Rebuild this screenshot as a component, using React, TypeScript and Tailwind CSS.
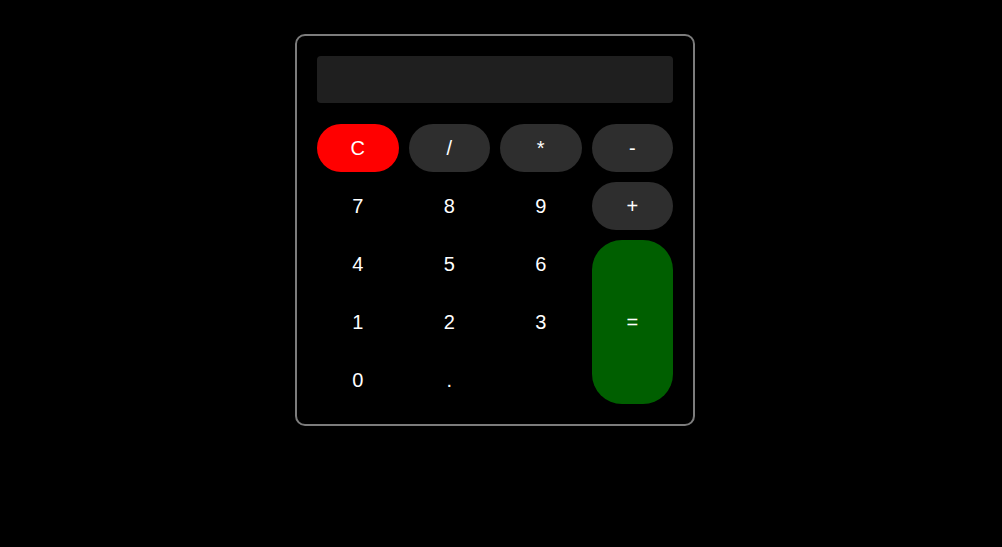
const keys: { label: string; kind: "clear" | "op" | "num" | "eq" }[] = [
  { label: "C", kind: "clear" },
  { label: "/", kind: "op" },
  { label: "*", kind: "op" },
  { label: "-", kind: "op" },
  { label: "7", kind: "num" },
  { label: "8", kind: "num" },
  { label: "9", kind: "num" },
  { label: "+", kind: "op" },
  { label: "4", kind: "num" },
  { label: "5", kind: "num" },
  { label: "6", kind: "num" },
  { label: "=", kind: "eq" },
  { label: "1", kind: "num" },
  { label: "2", kind: "num" },
  { label: "3", kind: "num" },
  { label: "0", kind: "num" },
  { label: ".", kind: "num" },
];

const styleFor = {
  clear: "bg-[#ff0000]",
  op: "bg-[#2e2e2e]",
  num: "bg-transparent",
  eq: "bg-[#005f00] row-span-3 col-start-4 row-start-3",
};

const App = () => {
  return (
    <div className="min-h-[547px] w-full bg-black font-['Liberation_Sans',Arial,sans-serif]">
      <div className="flex justify-center pr-3 pt-[34px]">
        <div className="w-[400px] rounded-[10px] border-2 border-[#7c7c7c] p-5">
          {/* Display */}
          <div className="h-[47px] w-full rounded-[4px] bg-[#1f1f1f]" />

          {/* Keypad */}
          <div className="mt-[21px] grid grid-cols-4 auto-rows-[48px] gap-[10px]">
            {keys.map((k) => (
              <button
                key={k.label}
                type="button"
                className={`flex items-center justify-center rounded-[30px] text-[20px] text-white ${styleFor[k.kind]}`}
              >
                {k.label}
              </button>
            ))}
          </div>
        </div>
      </div>
    </div>
  );
};

export default App;
